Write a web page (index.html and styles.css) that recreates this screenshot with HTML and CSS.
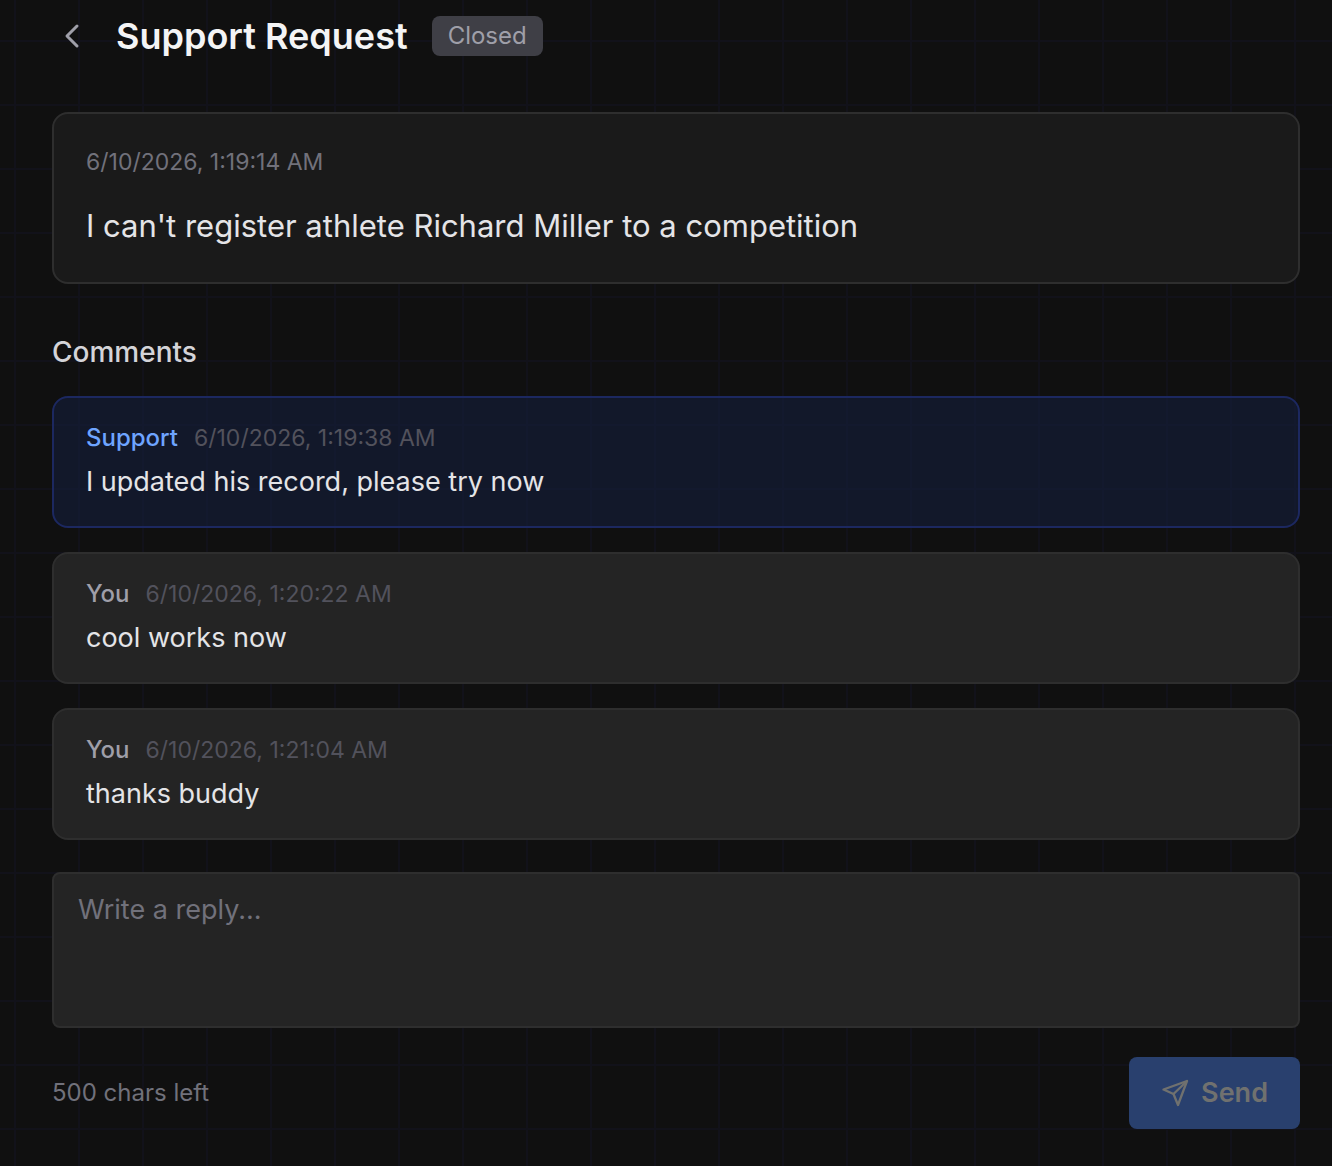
FILE: index.html
```
<!DOCTYPE html>
<html lang="en">
<head>
    <meta charset="UTF-8">
    <meta name="viewport" content="width=device-width, initial-scale=1.0">
    <title>Support Request</title>
    <link rel="stylesheet" href="styles.css">
</head>
<body>
    <main class="container">
        <header class="page-header">
            <button type="button" class="back-btn" aria-label="Back">
                <svg width="40" height="40" viewBox="0 0 40 40" fill="none" stroke="currentColor" stroke-width="3" stroke-linecap="round" stroke-linejoin="round">
                    <path d="M25 10L15 20L25 30"/>
                </svg>
            </button>
            <h1>Support Request</h1>
            <span class="badge">Closed</span>
        </header>

        <section class="request">
            <time class="date">6/10/2026, 1:19:14 AM</time>
            <p>I can't register athlete Richard Miller to a competition</p>
        </section>

        <h2>Comments</h2>
        <div class="comments">
            <article class="comment support">
                <div class="meta">
                    <span class="author">Support</span>
                    <time>6/10/2026, 1:19:38 AM</time>
                </div>
                <p>I updated his record, please try now</p>
            </article>
            <article class="comment">
                <div class="meta">
                    <span class="author">You</span>
                    <time>6/10/2026, 1:20:22 AM</time>
                </div>
                <p>cool works now</p>
            </article>
            <article class="comment">
                <div class="meta">
                    <span class="author">You</span>
                    <time>6/10/2026, 1:21:04 AM</time>
                </div>
                <p>thanks buddy</p>
            </article>
        </div>

        <form class="reply">
            <textarea id="txtReply" maxlength="500" placeholder="Write a reply..." aria-label="Write a reply"></textarea>
            <div class="reply-footer">
                <span class="chars">500 chars left</span>
                <button type="submit" class="send-btn" disabled>
                    <svg width="28" height="28" viewBox="0 0 28 28" fill="none" stroke="currentColor" stroke-width="2.3" stroke-linecap="round" stroke-linejoin="round">
                        <path d="M26 2L2.500 10.500L12.500 15L17 26L26 2Z"/>
                        <path d="M26 2L12.500 15"/>
                    </svg>
                    Send
                </button>
            </div>
        </form>
    </main>
</body>
</html>
```
FILE: styles.css
```
* {
    box-sizing: border-box;
}
body {
    margin: 0;
    min-height: 100vh;
    font-family: Inter, "Liberation Sans", sans-serif;
    font-size: 27px;
    line-height: 40px;
    color: #e4e4e7;
    background-color: #101010;
    background-image:
        linear-gradient(#12121a 2px, transparent 2px),
        linear-gradient(90deg, #12121a 2px, transparent 2px);
    background-size: 64px 64px;
    background-position: 14px 40px;
}
h1, h2, p {
    margin: 0;
}
.container {
    padding: 16px 32px 36px 52px;
}
.page-header {
    display: flex;
    align-items: center;
    margin-bottom: 56px;
}
.back-btn {
    display: flex;
    padding: 0;
    margin-right: 24px;
    border: none;
    background: none;
    color: #9f9fa9;
    cursor: pointer;
}
h1 {
    margin-right: 24px;
    font-size: 36px;
    font-weight: 600;
    color: #f4f4f5;
}
.badge {
    padding: 0 16px;
    border-radius: 8px;
    background-color: #3f3f46;
    font-size: 24px;
    color: #9f9fa9;
}
.request {
    padding: 32px;
    border: 2px solid #2e2e2e;
    border-radius: 16px;
    background-color: #1a1a1a;
}
time {
    font-size: 23px;
    line-height: 32px;
}
.request .date {
    display: block;
    margin-bottom: 24px;
    color: #71717b;
}
.request p {
    font-size: 31px;
    line-height: 48px;
}
h2 {
    margin: 48px 0 24px;
    font-size: 28px;
    font-weight: 500;
    color: #d4d4d8;
}
.comments {
    display: flex;
    flex-direction: column;
    gap: 24px;
}
.comment {
    padding: 24px 32px;
    border: 2px solid #2e2e2e;
    border-radius: 16px;
    background-color: #242424;
}
.comment.support {
    border-color: #1c2860;
    background-color: rgba(20, 30, 60, 0.6);
}
.meta {
    display: flex;
    gap: 16px;
    margin-bottom: 8px;
    line-height: 32px;
    color: #52525c;
}
.author {
    font-size: 24px;
    font-weight: 500;
    color: #9f9fa9;
}
.support .author {
    color: #6ea4ff;
}
.reply {
    margin-top: 32px;
}
textarea {
    display: block;
    width: 100%;
    height: 156px;
    padding: 16px 24px;
    border: 2px solid #2e2e2e;
    border-radius: 8px;
    background-color: #242424;
    font: inherit;
    color: inherit;
    resize: none;
}
textarea::placeholder {
    color: #71717b;
}
.reply-footer {
    display: flex;
    justify-content: space-between;
    align-items: center;
    margin-top: 29px;
}
.chars {
    font-size: 24px;
    color: #71717b;
}
.send-btn {
    display: flex;
    align-items: center;
    gap: 12px;
    padding: 16px 32px;
    border: none;
    border-radius: 8px;
    background-color: rgba(43, 67, 116, 0.94);
    font: inherit;
    font-weight: 600;
    color: #70716f;
}
```
